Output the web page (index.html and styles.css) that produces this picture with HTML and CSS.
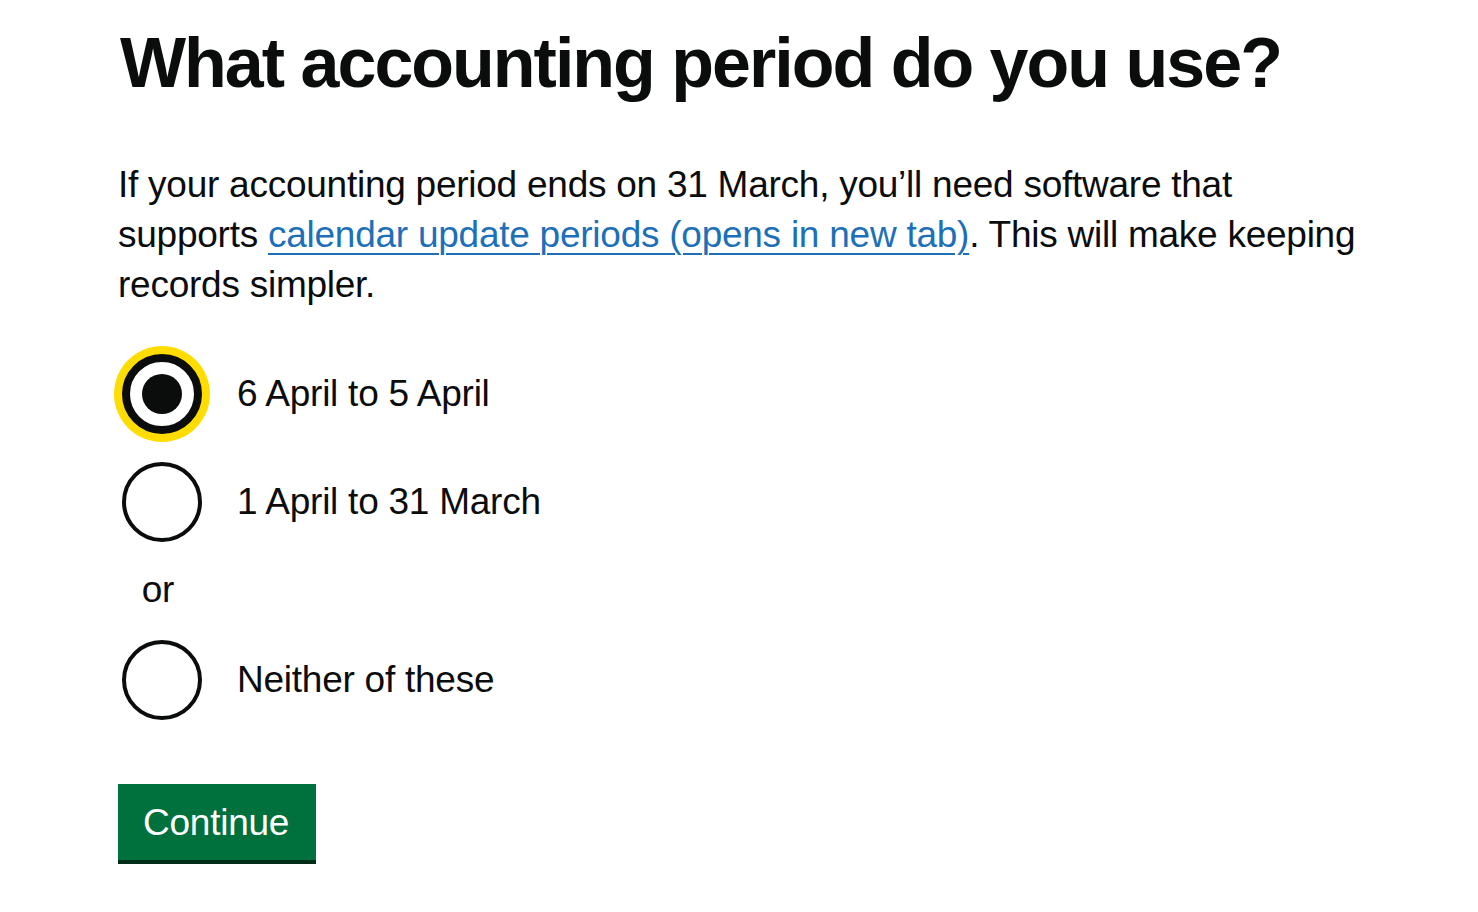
FILE: index.html
```html
<!DOCTYPE html>
<html lang="en">
<head>
<meta charset="utf-8">
<title>What accounting period do you use?</title>
<link rel="stylesheet" href="styles.css">
</head>
<body>
<main class="page">
  <h1 class="heading">What accounting period do you use?</h1>
  <p class="lede">If your accounting period ends on 31 March, you’ll need software that supports <a class="link" href="#">calendar update periods (opens in new tab)</a>. This will make keeping records simpler.</p>
  <form class="form">
    <div class="radios">
      <label class="radio">
        <input class="radio-input is-focused" type="radio" name="period" checked>
        <span class="radio-label">6 April to 5 April</span>
      </label>
      <label class="radio radio-second">
        <input class="radio-input" type="radio" name="period">
        <span class="radio-label">1 April to 31 March</span>
      </label>
      <div class="divider">or</div>
      <label class="radio radio-last">
        <input class="radio-input" type="radio" name="period">
        <span class="radio-label">Neither of these</span>
      </label>
    </div>
    <button class="button" type="button">Continue</button>
  </form>
</main>
</body>
</html>
```
FILE: styles.css
```css
html, body {
  margin: 0;
  padding: 0;
  background: #ffffff;
}

body {
  font-family: "Liberation Sans", Arial, sans-serif;
  color: #0b0c0c;
}

.page {
  padding: 23px 0 0 118px;
}

.heading {
  margin: 0;
  padding-left: 2px;
  font-size: 70px;
  line-height: 80px;
  font-weight: 700;
  letter-spacing: -2px;
}

.lede {
  margin: 57px 0 0;
  max-width: 1255px;
  font-size: 37px;
  line-height: 50px;
  letter-spacing: -0.25px;
}

.link {
  color: #1d70b8;
  text-decoration: underline;
  text-decoration-thickness: 2px;
  text-underline-offset: 6px;
}

.form {
  margin-top: 44px;
}

.radios {
  display: flex;
  flex-direction: column;
  align-items: flex-start;
}

.radio {
  display: flex;
  align-items: center;
  height: 80px;
  cursor: pointer;
}

.radio-second {
  margin-top: 28px;
}

.radio-last {
  margin-top: 25px;
}

.radio-input {
  -webkit-appearance: none;
  appearance: none;
  flex: none;
  box-sizing: border-box;
  width: 80px;
  height: 80px;
  margin: 0 0 0 4px;
  border: 4px solid #0b0c0c;
  border-radius: 50%;
  background: #ffffff;
  position: relative;
  outline: none;
}

.radio-input:checked::after {
  content: "";
  position: absolute;
  left: 50%;
  top: 50%;
  width: 40px;
  height: 40px;
  margin: -20px 0 0 -20px;
  border-radius: 50%;
  background: #0b0c0c;
}

.radio-input.is-focused {
  border-width: 8px;
  box-shadow: 0 0 0 8px #ffdd00;
}

.radio-label {
  margin-left: 35px;
  font-size: 37px;
  line-height: 50px;
  letter-spacing: -0.25px;
}

.divider {
  margin-top: 23px;
  width: 80px;
  text-align: center;
  font-size: 37px;
  line-height: 50px;
  letter-spacing: -0.25px;
}

.button {
  display: inline-block;
  box-sizing: border-box;
  margin-top: 64px;
  padding: 20px 27px 19px 25px;
  border: 0;
  border-bottom: 4px solid #002d18;
  border-radius: 0;
  background: #00703c;
  color: #ffffff;
  font-family: inherit;
  font-size: 37px;
  line-height: 37px;
  letter-spacing: -0.25px;
  cursor: pointer;
}
```
